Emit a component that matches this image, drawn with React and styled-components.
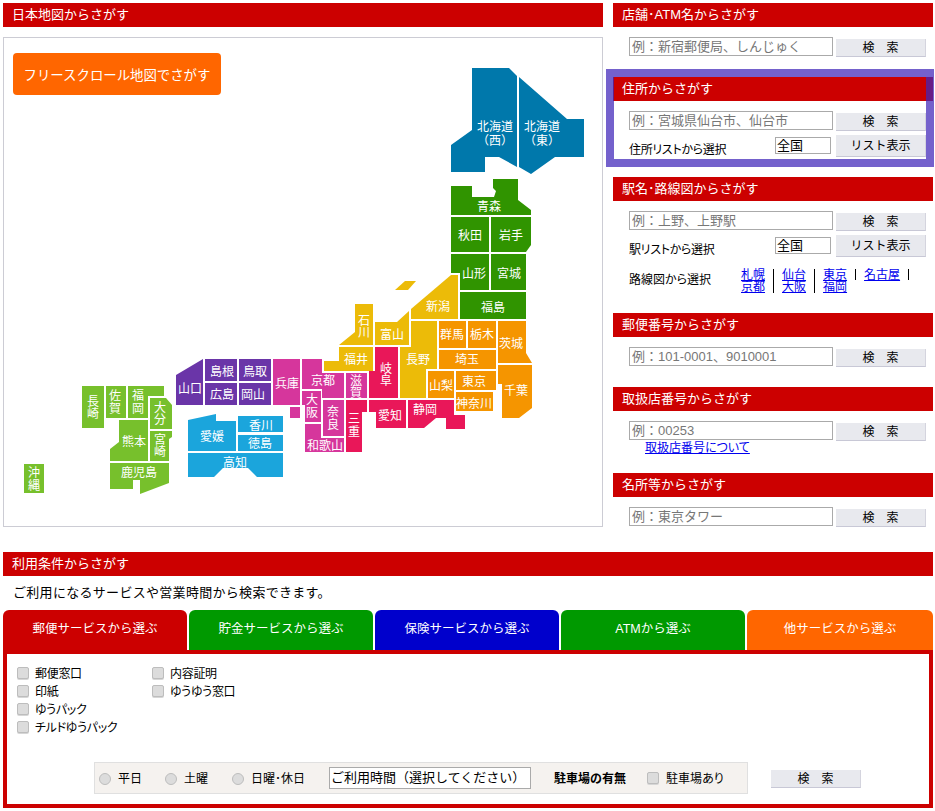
import { Fragment } from "react";
import styled, { createGlobalStyle } from "styled-components";

const GlobalStyle = createGlobalStyle`
  html, body {
    margin: 0;
    padding: 0;
    background: #fff;
  }
  body {
    font-family: "Liberation Sans", "Noto Sans CJK JP", sans-serif;
    font-size: 12px;
    color: #000;
  }
`;

const Page = styled.div`
  width: 930px;
  padding: 3px 2px 0 3px;
`;

const TopRow = styled.div`
  display: flex;
  gap: 10px;
`;

const LeftColumn = styled.div`
  width: 600px;
`;

const RightColumn = styled.div`
  width: 320px;
  display: flex;
  flex-direction: column;
  gap: 20px;
`;

const SectionTitle = styled.h2`
  margin: 0;
  height: 24px;
  padding-left: 9px;
  font-size: 13px;
  font-weight: normal;
  line-height: 23px;
  color: #fff;
  background: #cc0000;
`;

const MapBox = styled.div`
  position: relative;
  box-sizing: border-box;
  height: 490px;
  margin-top: 10px;
  padding: 15px 0 0 9px;
  border: 1px solid #ccccd4;
`;

const MapCanvas = styled.svg`
  position: absolute;
  inset: 0;
  width: 100%;
  height: 100%;
`;

const PrefLabel = styled.text`
  font-family: "Noto Sans CJK JP", sans-serif;
  font-size: 12px;
  fill: #fff;
  text-anchor: middle;
`;

const ScrollMapButton = styled.button`
  position: relative;
  z-index: 1;
  width: 208px;
  height: 42px;
  padding: 0;
  border: 0;
  border-radius: 4px;
  font-family: inherit;
  font-size: 13.4px;
  color: #fff;
  background: #ff6600;
`;

const Section = styled.section`
  position: relative;
`;

const Highlight = styled.div`
  position: absolute;
  top: -8px;
  left: -7px;
  box-sizing: border-box;
  width: 328px;
  height: 98px;
  border: 8px solid rgba(64, 38, 185, 0.73);
  pointer-events: none;
`;

const SearchLine = styled.div`
  display: flex;
  gap: 3px;
  margin-top: 10px;
  padding-left: 16px;
`;

const KeywordInput = styled.input`
  box-sizing: border-box;
  width: 204px;
  height: 19px;
  padding: 0 2px;
  border: 1px solid #aaa;
  border-radius: 0;
  font-family: inherit;
  font-size: 13px;

  &::placeholder {
    color: #777;
    opacity: 1;
  }
`;

const GrayButton = styled.button`
  box-sizing: border-box;
  width: 90px;
  height: ${({ $tall }) => ($tall ? "22px" : "18px")};
  margin-top: ${({ $tall }) => ($tall ? "0" : "2px")};
  padding: 1px 0 0;
  border: 0;
  border-bottom: 1px solid #c8c8d6;
  border-right: 1px solid #d4d4de;
  font-family: inherit;
  font-size: 12px;
  line-height: 16px;
  color: #000;
  background: #e8e9ee;
`;

const ListLine = styled.div`
  display: flex;
  height: 22px;
  margin-top: 4px;
  padding-left: 16px;
`;

const ListLabel = styled.span`
  width: 146px;
  padding-top: 7px;
  font-size: 12px;
  line-height: 16px;
  letter-spacing: -0.3px;
  font-feature-settings: "palt";
`;

const AreaSelect = styled.select`
  box-sizing: border-box;
  width: 56px;
  height: 17px;
  margin: 2px 5px 0 0;
  padding: 0 1px;
  border: 1px solid #aaa;
  border-radius: 0;
  appearance: none;
  font-family: inherit;
  font-size: 13px;
  line-height: 15px;
  color: #000;
  background: #fff;
`;

const RouteLine = styled.div`
  display: flex;
  height: 24px;
  margin-top: 12px;
  padding-left: 16px;
`;

const RouteLabel = styled.span`
  width: 112px;
  padding-top: 3px;
  line-height: 16px;
  font-feature-settings: "palt";
`;

const RouteList = styled.div`
  display: flex;
  align-items: flex-start;
  gap: 8px;
`;

const RouteLink = styled.a`
  display: block;
  line-height: 12px;
  color: #0000ee;
  text-decoration: underline;
`;

const RouteDivider = styled.span`
  width: 1px;
  height: ${({ $short }) => ($short ? "11px" : "24px")};
  background: #000;
`;

const NumberNote = styled.a`
  display: block;
  box-sizing: border-box;
  height: 12px;
  margin-left: 32px;
  padding-top: 1px;
  line-height: 12px;
  font-feature-settings: "palt";
  color: #0000ee;
  text-decoration: underline;
`;

const ConditionBlock = styled.section`
  margin-top: 25px;
`;

const Intro = styled.p`
  margin: 0;
  height: 34px;
  padding-left: 10px;
  font-size: 13px;
  line-height: 34px;
  letter-spacing: 0.3px;
`;

const Tabs = styled.div`
  display: flex;
  gap: 2px;
`;

const Tab = styled.div`
  flex: ${({ $wide }) => ($wide ? "0 0 186px" : "0 0 184px")};
  height: 40px;
  border-radius: 6px 6px 0 0;
  font-size: 12.5px;
  line-height: 39px;
  text-align: center;
  color: #fff;
  background: ${({ $color }) => $color};
`;

const Panel = styled.div`
  box-sizing: border-box;
  height: 158px;
  padding: 9px 0 10px 10px;
  border: 4px solid #cc0000;
  display: flex;
  flex-direction: column;
`;

const CheckColumns = styled.div`
  display: flex;
`;

const CheckColumn = styled.div`
  width: 135px;
`;

const CheckRow = styled.label`
  display: flex;
  align-items: center;
  gap: 6px;
  height: 18px;
  letter-spacing: -0.3px;
  font-feature-settings: "palt";
`;

const CheckBox = styled.input.attrs({ type: "checkbox" })`
  box-sizing: border-box;
  width: 12px;
  height: 12px;
  margin: 1px 0 0;
  border: 1px solid #bdbdbd;
  border-radius: 2px;
  appearance: none;
  background: #dcdcdc;
  box-shadow: 0 1px 0 #d6d6d6;
`;

const FilterLine = styled.div`
  display: flex;
  margin-top: auto;
  margin-left: 77px;
`;

const FilterBar = styled.div`
  box-sizing: border-box;
  width: 654px;
  height: 32px;
  padding: 0 0 1px 4px;
  border: 1px solid #e0e0e0;
  display: flex;
  align-items: center;
  background: #f5f2ef;
`;

const RadioRow = styled.label`
  display: flex;
  align-items: center;
  gap: 7px;
  margin-right: ${({ $gap }) => $gap}px;
  font-feature-settings: "palt";
`;

const RadioDot = styled.input.attrs({ type: "radio" })`
  box-sizing: border-box;
  width: 12px;
  height: 12px;
  margin: 2px 0 0;
  border: 1px solid #bdbdbd;
  border-radius: 50%;
  appearance: none;
  background: #dcdcdc;
`;

const HoursSelect = styled.select`
  box-sizing: border-box;
  width: 202px;
  height: 22px;
  padding: 0 1px;
  border: 1px solid #aaa;
  border-radius: 0;
  appearance: none;
  font-family: inherit;
  font-size: 13px;
  color: #000;
  background: #fff;
`;

const ParkingTitle = styled.strong`
  margin: 0 21px 0 23px;
  font-size: 12px;
`;

const FilterSearch = styled(GrayButton)`
  margin: 8px 0 0 23px;
`;

const BLUE = "#0078ab";
const GREEN = "#309400";
const GOLD = "#ecbb08";
const ORANGE = "#f59500";
const CRIMSON = "#e91759";
const MAGENTA = "#d6369c";
const PURPLE = "#6a35a8";
const SKY = "#1ba5dc";
const LEAF = "#77c02c";

const box = (x1, y1, x2, y2) => `${x1},${y1} ${x2},${y1} ${x2},${y2} ${x1},${y2}`;

// coordinates are page pixels, labels are [text, center x, center y]
const prefectures = [
  { c: BLUE, p: "472,68 509,68 517,76 517,167 499,157 485,157 485,172 451,172 451,145 472,130", t: [["北海道", 495, 126], ["（西）", 495, 140]] },
  { c: BLUE, p: "519,77 567,119 584,119 584,157 555,157 531,174 519,167", t: [["北海道", 542, 126], ["（東）", 542, 140]] },
  { c: GREEN, p: "451,186 472,186 472,197 494,197 496,191 493,188 493,179 518,179 518,200 531,210 531,215 451,215", t: [["青森", 489, 206]] },
  { c: GREEN, p: box(451, 217, 489, 252), t: [["秋田", 470, 235]] },
  { c: GREEN, p: "491,217 531,217 531,245 526,252 491,252", t: [["岩手", 511, 235]] },
  { c: GREEN, p: "451,254 489,254 489,290 460,290 460,273 451,273", t: [["山形", 474, 273]] },
  { c: GREEN, p: box(491, 254, 526, 290), t: [["宮城", 509, 273]] },
  { c: GREEN, p: box(460, 292, 526, 319), t: [["福島", 493, 307]] },
  { c: GOLD, p: "411,319 411,309 451,275 458,275 458,319", t: [["新潟", 438, 306]] },
  { c: GOLD, p: "395,290 405,281 416,281 408,290", t: [] },
  { c: GOLD, p: "355,304 373,304 373,345 339,345 355,332", t: [["石", 364, 320], ["川", 364, 332]] },
  { c: GOLD, p: "375,322 397,322 409,311 409,345 375,345", t: [["富山", 392, 334]] },
  { c: GOLD, p: "339,347 373,347 373,371 324,371 324,361 339,361", t: [["福井", 356, 359]] },
  { c: GOLD, p: "411,321 437,321 437,369 426,369 426,398 400,398 400,347 411,347", t: [["長野", 418, 359]] },
  { c: ORANGE, p: box(439, 321, 466, 348), t: [["群馬", 452, 334]] },
  { c: ORANGE, p: box(468, 321, 496, 348), t: [["栃木", 482, 334]] },
  { c: ORANGE, p: "498,321 526,321 526,353 532,363 498,363", t: [["茨城", 511, 343]] },
  { c: ORANGE, p: "498,365 532,365 532,408 519,418 502,418 502,384 498,384", t: [["千葉", 516, 390]] },
  { c: ORANGE, p: box(439, 350, 496, 369), t: [["埼玉", 467, 359]] },
  { c: ORANGE, p: box(428, 371, 454, 398), t: [["山梨", 441, 385]] },
  { c: ORANGE, p: box(456, 371, 496, 390), t: [["東京", 474, 381]] },
  { c: ORANGE, p: box(456, 392, 493, 411), t: [["神奈川", 474, 403]] },
  { c: CRIMSON, p: "375,347 398,347 398,398 369,398 369,371 375,371", t: [["岐", 386, 368], ["阜", 386, 380]] },
  { c: CRIMSON, p: "408,400 454,400 454,415 465,415 465,429 446,429 446,418 436,418 424,428 408,428", t: [["静岡", 425, 409]] },
  { c: CRIMSON, p: "369,400 406,400 406,428 376,428 376,412 369,412", t: [["愛知", 390, 415]] },
  { c: CRIMSON, p: "346,400 367,400 367,412 362,412 362,452 346,452", t: [["三", 354, 418], ["重", 354, 431]] },
  { c: MAGENTA, p: box(273, 359, 300, 405), t: [["兵庫", 287, 383]] },
  { c: MAGENTA, p: box(290, 407, 300, 418), t: [] },
  { c: MAGENTA, p: "302,359 322,359 322,373 344,373 344,398 322,398 322,389 302,389", t: [["京都", 323, 380]] },
  { c: MAGENTA, p: box(346, 373, 367, 398), t: [["滋", 356, 380], ["賀", 356, 392]] },
  { c: MAGENTA, p: "302,391 321,391 321,422 305,422 305,405 302,405", t: [["大", 312, 399], ["阪", 312, 412]] },
  { c: MAGENTA, p: box(323, 400, 344, 436), t: [["奈", 333, 411], ["良", 333, 424]] },
  { c: MAGENTA, p: "305,424 321,424 321,438 344,438 344,452 305,452", t: [["和歌山", 325, 445]] },
  { c: PURPLE, p: "176,375 203,359 203,405 176,405", t: [["山口", 190, 388]] },
  { c: PURPLE, p: box(205, 359, 237, 381), t: [["島根", 222, 371]] },
  { c: PURPLE, p: box(239, 359, 271, 381), t: [["鳥取", 255, 371]] },
  { c: PURPLE, p: box(205, 383, 237, 405), t: [["広島", 222, 394]] },
  { c: PURPLE, p: box(239, 383, 271, 405), t: [["岡山", 253, 394]] },
  { c: SKY, p: "188,420 216,414 216,421 236,421 236,451 188,451", t: [["愛媛", 212, 436]] },
  { c: SKY, p: box(238, 416, 283, 432), t: [["香川", 261, 425]] },
  { c: SKY, p: box(238, 435, 283, 451), t: [["徳島", 260, 443]] },
  { c: SKY, p: "188,453 283,453 283,477 257,477 248,468 223,468 214,477 188,477", t: [["高知", 235, 462]] },
  { c: LEAF, p: box(82, 386, 104, 428), t: [["長", 93, 401], ["崎", 93, 413]] },
  { c: LEAF, p: box(106, 386, 126, 418), t: [["佐", 115, 395], ["賀", 115, 408]] },
  { c: LEAF, p: "128,386 164,386 164,396 148,396 148,418 128,418", t: [["福", 138, 395], ["岡", 138, 408]] },
  { c: LEAF, p: "150,398 166,398 172,405 172,429 150,429", t: [["大", 160, 407], ["分", 160, 419]] },
  { c: LEAF, p: "119,420 148,420 148,461 110,461 110,449 119,442", t: [["熊本", 134, 441]] },
  { c: LEAF, p: "150,431 172,431 172,437 169,439 169,461 150,461", t: [["宮", 160, 439], ["崎", 160, 451]] },
  { c: LEAF, p: "110,463 169,463 169,483 140,494 140,480 133,480 133,489 110,489", t: [["鹿児島", 139, 472]] },
  { c: LEAF, p: box(24, 464, 44, 493), t: [["沖", 34, 472], ["縄", 34, 485]] },
];

const tabs = [
  { label: "郵便サービスから選ぶ", color: "#cc0000" },
  { label: "貯金サービスから選ぶ", color: "#009900" },
  { label: "保険サービスから選ぶ", color: "#0000cc" },
  { label: "ATMから選ぶ", color: "#009900" },
  { label: "他サービスから選ぶ", color: "#ff6600", wide: true },
];

const routes = [
  { lines: ["札幌", "京都"] },
  { lines: ["仙台", "大阪"] },
  { lines: ["東京", "福岡"], short: true },
  { lines: ["名古屋"], short: true },
];

function JapanMap() {
  return (
    <MapCanvas viewBox="4 38 598 488">
      {prefectures.map((pref, i) => (
        <g key={i}>
          <polygon points={pref.p} fill={pref.c} />
          {pref.t.length > 0 && (
            <PrefLabel>
              {pref.t.map(([text, x, y]) => (
                <tspan key={text + y} x={x} y={y + 4.5}>
                  {text}
                </tspan>
              ))}
            </PrefLabel>
          )}
        </g>
      ))}
    </MapCanvas>
  );
}

function SearchRow({ placeholder }) {
  return (
    <SearchLine>
      <KeywordInput placeholder={placeholder} />
      <GrayButton>検　索</GrayButton>
    </SearchLine>
  );
}

function ListRow({ label }) {
  return (
    <ListLine>
      <ListLabel>{label}</ListLabel>
      <AreaSelect defaultValue="全国">
        <option>全国</option>
      </AreaSelect>
      <GrayButton $tall>リスト表示</GrayButton>
    </ListLine>
  );
}

function Check({ label }) {
  return (
    <CheckRow>
      <CheckBox />
      {label}
    </CheckRow>
  );
}

function App() {
  return (
    <Page>
      <GlobalStyle />
      <TopRow>
        <LeftColumn>
          <SectionTitle>日本地図からさがす</SectionTitle>
          <MapBox>
            <JapanMap />
            <ScrollMapButton>フリースクロール地図でさがす</ScrollMapButton>
          </MapBox>
        </LeftColumn>

        <RightColumn>
          <Section>
            <SectionTitle>店舗･ATM名からさがす</SectionTitle>
            <SearchRow placeholder="例：新宿郵便局、しんじゅく" />
          </Section>

          <Section>
            <SectionTitle>住所からさがす</SectionTitle>
            <SearchRow placeholder="例：宮城県仙台市、仙台市" />
            <ListRow label="住所リストから選択" />
            <Highlight />
          </Section>

          <Section>
            <SectionTitle>駅名･路線図からさがす</SectionTitle>
            <SearchRow placeholder="例：上野、上野駅" />
            <ListRow label="駅リストから選択" />
            <RouteLine>
              <RouteLabel>路線図から選択</RouteLabel>
              <RouteList>
                {routes.map((route) => (
                  <Fragment key={route.lines[0]}>
                    <RouteLink href="#">
                      {route.lines.map((line) => (
                        <div key={line}>{line}</div>
                      ))}
                    </RouteLink>
                    <RouteDivider $short={route.short} />
                  </Fragment>
                ))}
              </RouteList>
            </RouteLine>
          </Section>

          <Section>
            <SectionTitle>郵便番号からさがす</SectionTitle>
            <SearchRow placeholder="例：101-0001、9010001" />
          </Section>

          <Section>
            <SectionTitle>取扱店番号からさがす</SectionTitle>
            <SearchRow placeholder="例：00253" />
            <NumberNote href="#">取扱店番号について</NumberNote>
          </Section>

          <Section>
            <SectionTitle>名所等からさがす</SectionTitle>
            <SearchRow placeholder="例：東京タワー" />
          </Section>
        </RightColumn>
      </TopRow>

      <ConditionBlock>
        <SectionTitle>利用条件からさがす</SectionTitle>
        <Intro>ご利用になるサービスや営業時間から検索できます。</Intro>
        <Tabs>
          {tabs.map((tab) => (
            <Tab key={tab.label} $color={tab.color} $wide={tab.wide}>
              {tab.label}
            </Tab>
          ))}
        </Tabs>
        <Panel>
          <CheckColumns>
            <CheckColumn>
              <Check label="郵便窓口" />
              <Check label="印紙" />
              <Check label="ゆうパック" />
              <Check label="チルドゆうパック" />
            </CheckColumn>
            <CheckColumn>
              <Check label="内容証明" />
              <Check label="ゆうゆう窓口" />
            </CheckColumn>
          </CheckColumns>
          <FilterLine>
            <FilterBar>
              <RadioRow $gap={23}>
                <RadioDot name="day" />
                平日
              </RadioRow>
              <RadioRow $gap={24}>
                <RadioDot name="day" />
                土曜
              </RadioRow>
              <RadioRow $gap={24}>
                <RadioDot name="day" />
                日曜･休日
              </RadioRow>
              <HoursSelect>
                <option>ご利用時間（選択してください）</option>
              </HoursSelect>
              <ParkingTitle>駐車場の有無</ParkingTitle>
              <RadioRow $gap={0}>
                <CheckBox />
                駐車場あり
              </RadioRow>
            </FilterBar>
            <FilterSearch>検　索</FilterSearch>
          </FilterLine>
        </Panel>
      </ConditionBlock>
    </Page>
  );
}

export default App;
